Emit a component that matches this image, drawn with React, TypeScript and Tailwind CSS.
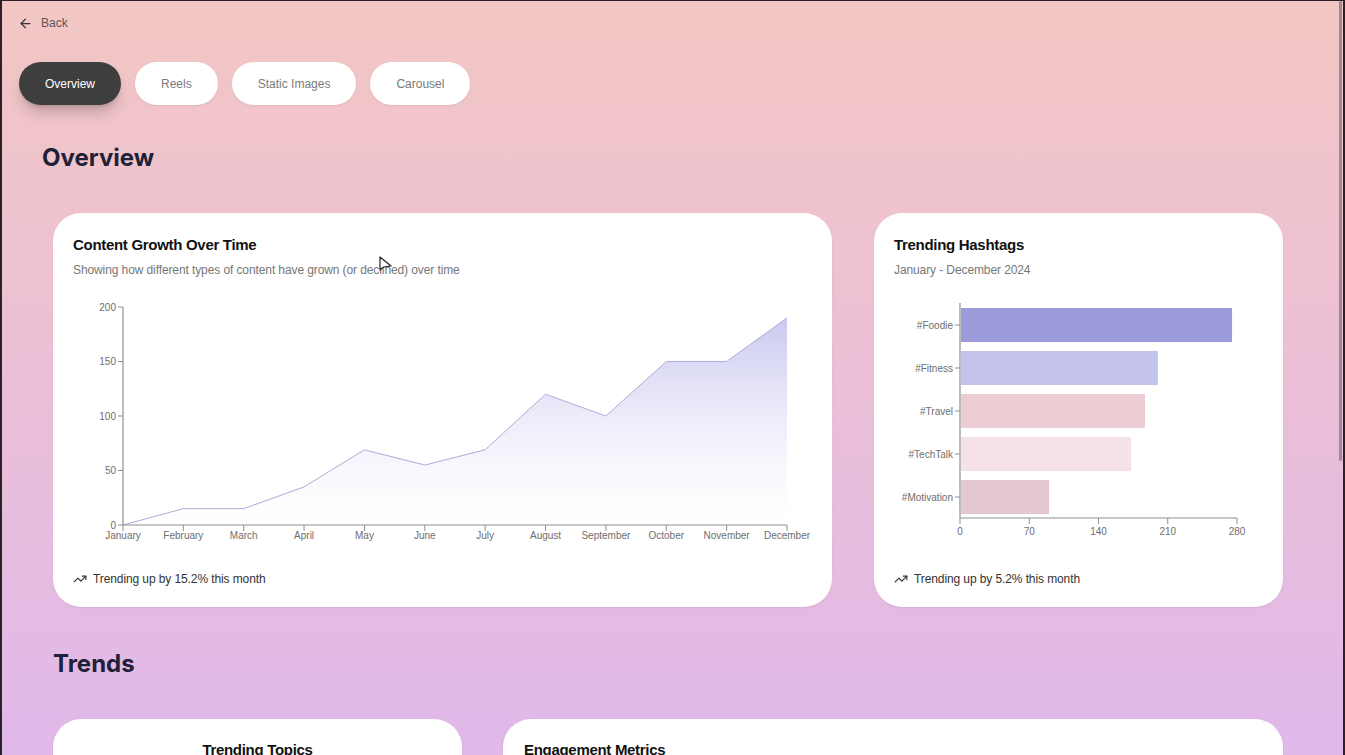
import { ArrowLeft, TrendingUp } from 'lucide-react';

const MONTHS = [
  'January',
  'February',
  'March',
  'April',
  'May',
  'June',
  'July',
  'August',
  'September',
  'October',
  'November',
  'December',
];
const GROWTH = [0, 15, 15, 35, 69, 55, 69, 120, 100, 150, 150, 190];

const HASHTAGS = [
  { tag: '#Foodie', value: 275, color: '#9c9cdc' },
  { tag: '#Fitness', value: 200, color: '#c3c3ec' },
  { tag: '#Travel', value: 187, color: '#ebcdd3' },
  { tag: '#TechTalk', value: 173, color: '#f5e2e6' },
  { tag: '#Motivation', value: 90, color: '#e4c8d0' },
];

const TABS = ['Overview', 'Reels', 'Static Images', 'Carousel'];

const FONT = { fontFamily: '"Liberation Sans", Arial, sans-serif' };

function GrowthChart() {
  const x = (i: number) => 50 + (i * 664) / 11;
  const y = (v: number) => 230 - v * 1.09;
  const line = GROWTH.map((v, i) => `${x(i)},${y(v)}`).join(' ');
  const area = `M${x(0)},230 L${line.replace(/ /g, ' L')} L${x(11)},230 Z`;

  return (
    <svg width="739" height="255" className="block" style={FONT}>
      <defs>
        <linearGradient id="growthFill" x1="0" y1="0" x2="0" y2="1">
          <stop offset="0%" stopColor="#c4c2ee" stopOpacity="0.9" />
          <stop offset="100%" stopColor="#ffffff" stopOpacity="0.3" />
        </linearGradient>
      </defs>
      <path d={area} fill="url(#growthFill)" />
      <polyline points={line} fill="none" stroke="#aeacd9" strokeWidth="1" />
      <line x1="50" y1="12" x2="50" y2="230" stroke="#8f8f8f" strokeWidth="1.2" />
      <line x1="50" y1="230" x2="714" y2="230" stroke="#8f8f8f" strokeWidth="1.2" />
      {[0, 50, 100, 150, 200].map((v) => (
        <g key={v}>
          <line x1="45" y1={y(v)} x2="50" y2={y(v)} stroke="#8f8f8f" />
          <text x="43" y={y(v) + 3.5} textAnchor="end" fontSize="10" fill="#6e6e6e">
            {v}
          </text>
        </g>
      ))}
      {MONTHS.map((m, i) => (
        <g key={m}>
          <line x1={x(i)} y1="230" x2={x(i)} y2="236" stroke="#8f8f8f" />
          <text x={x(i)} y="244" textAnchor="middle" fontSize="10" fill="#6e6e6e">
            {m}
          </text>
        </g>
      ))}
    </svg>
  );
}

function HashtagChart() {
  const sx = (v: number) => 66 + (v * 277) / 280;

  return (
    <svg width="369" height="250" className="block" style={FONT}>
      {HASHTAGS.map((h, i) => {
        const top = 9 + i * 43;
        return (
          <g key={h.tag}>
            <rect x="67" y={top + 4} width={sx(h.value) - 67} height="34" fill={h.color} />
            <line x1="61" y1={top + 21} x2="66" y2={top + 21} stroke="#8f8f8f" />
            <text x="59" y={top + 24.5} textAnchor="end" fontSize="10" fill="#6e6e6e">
              {h.tag}
            </text>
          </g>
        );
      })}
      <line x1="66" y1="8" x2="66" y2="223" stroke="#8f8f8f" strokeWidth="1.2" />
      <line x1="66" y1="223" x2="343" y2="223" stroke="#8f8f8f" strokeWidth="1.2" />
      {[0, 70, 140, 210, 280].map((v) => (
        <g key={v}>
          <line x1={sx(v)} y1="223" x2={sx(v)} y2="229" stroke="#8f8f8f" />
          <text x={sx(v)} y="240" textAnchor="middle" fontSize="10" fill="#6e6e6e">
            {v}
          </text>
        </g>
      ))}
    </svg>
  );
}

function CardFooter({ text }: { text: string }) {
  return (
    <div className="mt-auto flex h-4 items-center gap-[6px] text-xs tracking-[-0.1px] text-[#333]">
      <TrendingUp className="size-[14px]" strokeWidth={2} />
      <span>{text}</span>
    </div>
  );
}

export default function App() {
  return (
    <div
      className="relative h-[755px] w-full overflow-hidden border-l-2 border-r-2 border-t border-[#2a2226] bg-gradient-to-b from-[#f3c7c3] via-[#ebbfd6] to-[#e0b8ea]"
      style={FONT}
    >
      {/* scrollbar thumb */}
      <div className="pointer-events-none absolute right-[1px] top-0 h-[460px] w-[3px] rounded-full bg-[#9c8a96]" />

      {/* cursor */}
      <svg
        className="pointer-events-none absolute left-[377px] top-[255px]"
        width="14"
        height="18"
        viewBox="0 0 14 18"
      >
        <path d="M1 1 L1 14 L4.5 11 L12 10 Z" fill="#fff" stroke="#222" strokeWidth="1.2" strokeLinejoin="round" />
      </svg>

      <div className="mt-[15px] flex h-[14px] items-center gap-[8px] pl-[16px] text-xs text-[#5c5458]">
        <ArrowLeft className="size-[15px] text-[#3a3436]" strokeWidth={2} />
        <span>Back</span>
      </div>

      <div className="mt-[32px] flex gap-[14px] pl-[17px]">
        {TABS.map((t, i) => (
          <button
            key={t}
            className={
              i === 0
                ? 'h-[43px] rounded-full bg-[#3e3e3e] px-[26px] text-xs text-white shadow-lg shadow-black/20'
                : 'h-[43px] rounded-full bg-white px-[26px] text-xs text-[#7a7a7a] shadow-sm shadow-black/5'
            }
          >
            {t}
          </button>
        ))}
      </div>

      <h1
        className="mt-[37px] pl-[40px] text-2xl font-bold leading-8 text-[#1f2138]"
        style={{ fontFamily: 'Inter, "Noto Sans", sans-serif' }}
      >
        Overview
      </h1>

      <div className="mt-[39px] grid grid-cols-[779px_409px] gap-[42px] pl-[51px]">
        <div className="flex h-[394px] flex-col rounded-[28px] bg-white px-[20px] pb-[20px] pt-[23px] shadow-sm shadow-black/5">
          <h2 className="text-[15px] font-bold leading-[18px] tracking-[-0.3px] text-[#111]">
            Content Growth Over Time
          </h2>
          <p className="mt-[8px] text-xs leading-4 tracking-[-0.1px] text-[#777]">
            Showing how different types of content have grown (or declined) over time
          </p>
          <div className="mt-[17px]">
            <GrowthChart />
          </div>
          <CardFooter text="Trending up by 15.2% this month" />
        </div>

        <div className="flex h-[394px] flex-col rounded-[28px] bg-white px-[20px] pb-[20px] pt-[23px] shadow-sm shadow-black/5">
          <h2 className="text-[15px] font-bold leading-[18px] tracking-[-0.3px] text-[#111]">
            Trending Hashtags
          </h2>
          <p className="mt-[8px] text-xs leading-4 tracking-[-0.1px] text-[#777]">January - December 2024</p>
          <div className="mt-[17px]">
            <HashtagChart />
          </div>
          <CardFooter text="Trending up by 5.2% this month" />
        </div>
      </div>

      <h1
        className="mt-[41px] pl-[51px] text-2xl font-bold leading-8 text-[#1f2138]"
        style={{ fontFamily: 'Inter, "Noto Sans", sans-serif' }}
      >
        Trends
      </h1>

      <div className="mt-[39px] grid grid-cols-[409px_780px] gap-[41px] pl-[51px]">
        <div className="h-[200px] rounded-[28px] bg-white px-[20px] pt-[22px] text-center shadow-sm shadow-black/5">
          <h2 className="text-[15px] font-bold leading-[18px] tracking-[-0.3px] text-[#111]">
            Trending Topics
          </h2>
        </div>
        <div className="h-[200px] rounded-[28px] bg-white px-[21px] pt-[22px] shadow-sm shadow-black/5">
          <h2 className="text-[15px] font-bold leading-[18px] tracking-[-0.3px] text-[#111]">
            Engagement Metrics
          </h2>
        </div>
      </div>
    </div>
  );
}
